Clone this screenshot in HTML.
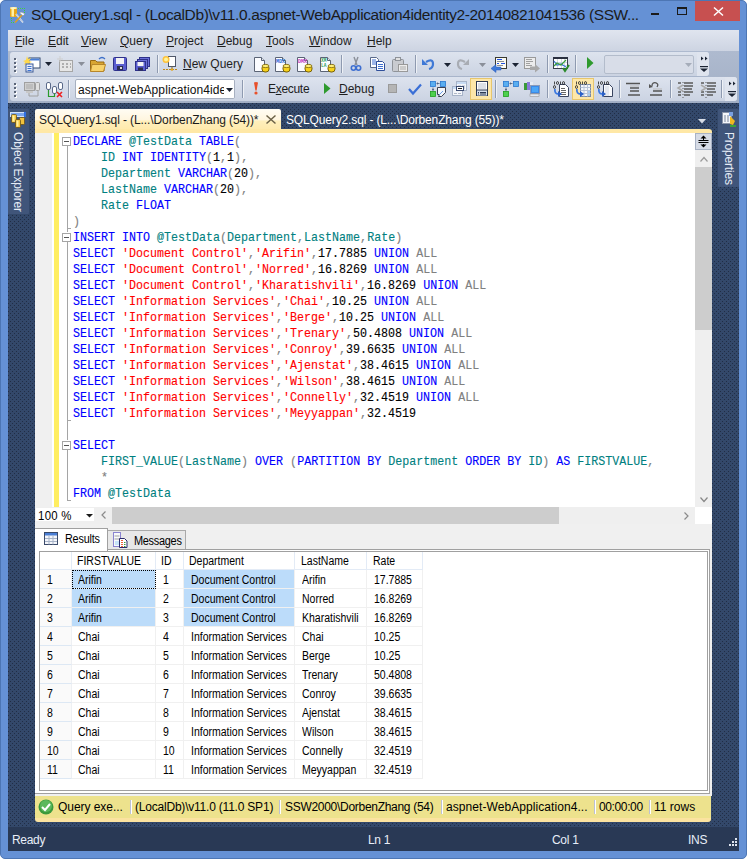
<!DOCTYPE html>
<html><head><meta charset="utf-8">
<style>
*{margin:0;padding:0;box-sizing:border-box}
html,body{width:747px;height:859px;overflow:hidden}
body{position:relative;background:#fff;font-family:"Liberation Sans",sans-serif;font-size:12px;color:#000}
.a{position:absolute}
svg.a{overflow:visible}
.nv{background-color:#33486a;background-image:conic-gradient(from 90deg at 1px 1px,transparent 0 50%,#202d45 50% 75%,transparent 75%),conic-gradient(from 90deg at 1px 1px,transparent 0 50%,#202d45 50% 75%,transparent 75%);background-size:4px 4px,4px 4px;background-position:0 0,2px 2px}
#frame{left:0;top:0;width:747px;height:859px;background:#6591d5;border:1px solid #4d76b4;border-radius:5px}
#title{left:31px;top:6px;font-size:15.5px;color:#1b1b1b;white-space:pre;letter-spacing:-0.38px}
#menubar{left:8px;top:30px;width:731px;height:21px;background:linear-gradient(#e0e5ef,#cdd4e2)}
.mi{position:absolute;top:4px;font-size:12px;color:#1e1e1e;white-space:pre}
u,.ul{text-decoration:underline;text-underline-offset:1px}
.tb{border-radius:3px;background:linear-gradient(#dde3ee,#cbd3e2)}
.code{font-family:"Liberation Mono",monospace;font-size:13px;line-height:16px;white-space:pre;transform-origin:0 0;transform:scaleX(0.89744);-webkit-text-stroke:0.12px}
.gt{font-size:12px;color:#000;white-space:pre;transform-origin:0 0;transform:scaleX(0.875)}
.st{font-size:12px;color:#000;white-space:pre;letter-spacing:-0.35px}
.sb{font-size:12px;color:#e8eef8;white-space:pre;letter-spacing:-0.3px}
.k{color:#0000ff}.i{color:#008080}.s{color:#ff0000}.g{color:#808080}.f{color:#ff00ff}
</style></head><body>
<div id="frame" class="a"></div>
<svg class="a" style="left:10px;top:7px" width="16" height="17" viewBox="0 0 16 17"><g fill="#3fcf3f"><rect x="8" y="1" width="1" height="1"/><rect x="10" y="1" width="1" height="1"/><rect x="12" y="1" width="1" height="1"/><rect x="14" y="1" width="1" height="1"/><rect x="14" y="3" width="1" height="1"/><rect x="14" y="5" width="1" height="1"/><rect x="1" y="11" width="1" height="1"/><rect x="1" y="13" width="1" height="1"/><rect x="1" y="15" width="1" height="1"/><rect x="3" y="15" width="1" height="1"/></g><rect x="0" y="0.5" width="7" height="9.5" rx="1" fill="#e8a81c"/><rect x="1.5" y="1" width="2.5" height="8.5" fill="#fff1a8"/><ellipse cx="3.5" cy="1" rx="3.5" ry="1" fill="#fff6c0"/><path d="M6 7L13 15.5" stroke="#e8eef8" stroke-width="1.6"/><path d="M6 7L13 15.5" stroke="#8a99b0" stroke-width="0.5"/><path d="M12 8L5 15.5" stroke="#e0a020" stroke-width="1.6"/><path d="M9 5.5Q12 4 15 7L13 9Z" fill="#f4f6fa" stroke="#7a8598" stroke-width="0.6"/></svg>
<div id="title" class="a">SQLQuery1.sql - (LocalDb)\v11.0.aspnet-WebApplication4identity2-20140821041536 (SSW...</div>
<div class="a" style="left:695px;top:1px;width:45px;height:20px;background:#c75050"></div>
<svg class="a" style="left:713px;top:7px" width="11" height="9"><path d="M1 0.5L10 8.5M10 0.5L1 8.5" stroke="#fff" stroke-width="1.5"/></svg>
<div class="a" style="left:677px;top:7px;width:10px;height:8px;border:1px solid #1b1b1b;border-top-width:2px"></div>
<div class="a" style="left:651px;top:13px;width:8px;height:2px;background:#1b1b1b"></div>
<div id="menubar" class="a">
<span class="mi" style="left:7px"><u>F</u>ile</span>
<span class="mi" style="left:40px"><u>E</u>dit</span>
<span class="mi" style="left:73px"><u>V</u>iew</span>
<span class="mi" style="left:112px"><u>Q</u>uery</span>
<span class="mi" style="left:158px"><u>P</u>roject</span>
<span class="mi" style="left:209px"><u>D</u>ebug</span>
<span class="mi" style="left:258px"><u>T</u>ools</span>
<span class="mi" style="left:301px"><u>W</u>indow</span>
<span class="mi" style="left:359px"><u>H</u>elp</span>
</div>
<div class="a" style="left:8px;top:51px;width:731px;height:52px;background:linear-gradient(#aebacf,#a2afc5)"></div>
<div class="a tb" style="left:10px;top:52px;width:699px;height:24px"></div>
<div class="a" style="left:697px;top:52px;width:12px;height:24px;background:#dfe4ee;border-radius:0 3px 3px 0"></div>
<div class="a tb" style="left:10px;top:77px;width:727px;height:24px"></div>
<div class="a" style="left:725px;top:77px;width:12px;height:24px;background:#dfe4ee;border-radius:0 3px 3px 0"></div>
<div class="a" style="left:14px;top:58px;width:2px;height:2px;background:#5b6578;box-shadow:1px 1px 0 #fff"></div><div class="a" style="left:14px;top:62px;width:2px;height:2px;background:#5b6578;box-shadow:1px 1px 0 #fff"></div><div class="a" style="left:14px;top:66px;width:2px;height:2px;background:#5b6578;box-shadow:1px 1px 0 #fff"></div><div class="a" style="left:14px;top:70px;width:2px;height:2px;background:#5b6578;box-shadow:1px 1px 0 #fff"></div>
<div class="a" style="left:14px;top:83px;width:2px;height:2px;background:#5b6578;box-shadow:1px 1px 0 #fff"></div><div class="a" style="left:14px;top:87px;width:2px;height:2px;background:#5b6578;box-shadow:1px 1px 0 #fff"></div><div class="a" style="left:14px;top:91px;width:2px;height:2px;background:#5b6578;box-shadow:1px 1px 0 #fff"></div><div class="a" style="left:14px;top:95px;width:2px;height:2px;background:#5b6578;box-shadow:1px 1px 0 #fff"></div>
<svg class="a" style="left:700px;top:56px" width="8" height="17" viewBox="0 0 8 17"><path d="M1 0.5L3.5 2.5L1 4.5Z M5 0.5L7.5 2.5L5 4.5Z" fill="#1b2333"/><rect x="0" y="10" width="8" height="1.2" fill="#1b2333"/><path d="M0 12.5H8L4 16Z" fill="#1b2333"/></svg>
<svg class="a" style="left:728px;top:81px" width="8" height="17" viewBox="0 0 8 17"><path d="M1 0.5L3.5 2.5L1 4.5Z M5 0.5L7.5 2.5L5 4.5Z" fill="#1b2333"/><rect x="0" y="10" width="8" height="1.2" fill="#1b2333"/><path d="M0 12.5H8L4 16Z" fill="#1b2333"/></svg>
<svg class="a" style="left:24px;top:56px" width="16" height="16" viewBox="0 0 16 16"><rect x="5" y="2" width="11" height="10" fill="#fff" stroke="#31466b"/><rect x="5.5" y="2.5" width="10" height="2" fill="#4a7fd6"/><path d="M3 0L4 3L7 2L5 5L8 6L5 7L6 9L3 7L0 9L1 6L-1 5L2 4Z" fill="#ffd84a"/><rect x="2" y="8" width="7" height="8" fill="#e8eefa" stroke="#3c5a95"/><path d="M3.5 10.5h4M3.5 12.5h4M3.5 14.5h4" stroke="#3e73d1"/></svg>
<svg class="a" style="left:45px;top:62px" width="7" height="4" viewBox="0 0 7 4"><path d="M0 0H7L3.5 4Z" fill="#1b2333"/></svg>
<svg class="a" style="left:57px;top:56px" width="16" height="16" viewBox="0 0 16 16"><rect x="2.5" y="4.5" width="13" height="11" fill="#e6e6e6" stroke="#a6a6a6"/><path d="M5 8h2M9 8h2M5 11h2M9 11h2M13 8h1M13 11h1" stroke="#9c9c9c" stroke-width="1.5"/><path d="M3 0v6M0 3h6" stroke="#cfcfcf"/></svg>
<svg class="a" style="left:78px;top:62px" width="7" height="4" viewBox="0 0 7 4"><path d="M0 0H7L3.5 4Z" fill="#8a8f99"/></svg>
<svg class="a" style="left:90px;top:56px" width="16" height="16" viewBox="0 0 16 16"><path d="M0.5 4.5h5l1.5 1.5h7v9h-13.5z" fill="#d9a632" stroke="#9a6b12"/><path d="M2 8.5h13.5l-2 7h-13z" fill="#f8d26b" stroke="#b7862a"/><path d="M9 3 Q12 0 15 3" stroke="#3d6fc8" fill="none" stroke-width="1.2"/></svg>
<svg class="a" style="left:113px;top:57px" width="14" height="14" viewBox="0 0 14 14"><rect x="0.5" y="0.5" width="13" height="13" rx="1" fill="#5a5ed0" stroke="#2e318a"/><rect x="3" y="1" width="8" height="6" fill="#f2f2f5"/><rect x="4" y="9" width="6" height="4" fill="#2a2d4f"/><rect x="7" y="10" width="2" height="2" fill="#ddd"/></svg>
<svg class="a" style="left:135px;top:57px" width="15" height="14" viewBox="0 0 15 14"><rect x="4.5" y="0.5" width="10" height="9" fill="#6a6ed8" stroke="#2e318a"/><rect x="2.5" y="2.5" width="10" height="9" fill="#6a6ed8" stroke="#2e318a"/><rect x="0.5" y="4.5" width="10" height="9" fill="#5a5ed0" stroke="#2e318a"/><rect x="2.5" y="5" width="6" height="4" fill="#f2f2f5"/><rect x="3" y="10.5" width="5" height="3" fill="#2a2d4f"/></svg>
<div class="a" style="left:157px;top:55px;width:1px;height:18px;background:#8e9ab0;box-shadow:1px 0 0 #eef1f6"></div>
<svg class="a" style="left:162px;top:56px" width="17" height="16" viewBox="0 0 17 16"><rect x="6.5" y="0.5" width="7" height="10" fill="#fff" stroke="#50586a"/><circle cx="4" cy="3.5" r="3.5" fill="#ffc23a"/><circle cx="4" cy="3.5" r="2" fill="#fff39a"/><path d="M1 13.5h15" stroke="#c08a1a" stroke-width="1.2" stroke-dasharray="2 1"/><path d="M10 10.5v3" stroke="#7d6a3a"/><circle cx="10" cy="13.5" r="1.3" fill="#e2a521"/></svg>
<div class="a" style="left:183px;top:57px"><span style="font-size:12px;color:#1e1e1e;white-space:pre"><u class="ul">N</u>ew Query</span></div>
<svg class="a" style="left:254px;top:57px" width="16" height="16" viewBox="0 0 16 16"><path d="M0.5 0.5h7l3 3v11h-10z" fill="#fbfcff" stroke="#5b6475"/><path d="M7.5 0.5v3h3" fill="#e2e7ef" stroke="#5b6475"/><rect x="8" y="8" width="7" height="7" rx="3" fill="#f7d21c" stroke="#7a6206"/><ellipse cx="11.5" cy="9" rx="3.5" ry="1.6" fill="#fff07a" stroke="#7a6206" stroke-width="0.8"/></svg>
<svg class="a" style="left:275px;top:57px" width="16" height="16" viewBox="0 0 16 16"><path d="M0.5 0.5h7l3 3v11h-10z" fill="#fbfcff" stroke="#5b6475"/><path d="M7.5 0.5v3h3" fill="#e2e7ef" stroke="#5b6475"/><text x="1" y="6" font-size="5" font-family="Liberation Mono" font-weight="bold" fill="#2a6ad6">MDX</text><rect x="8" y="8" width="7" height="7" rx="3" fill="#f7d21c" stroke="#7a6206"/><ellipse cx="11.5" cy="9" rx="3.5" ry="1.6" fill="#fff07a" stroke="#7a6206" stroke-width="0.8"/></svg>
<svg class="a" style="left:297px;top:57px" width="16" height="16" viewBox="0 0 16 16"><path d="M0.5 0.5h7l3 3v11h-10z" fill="#fbfcff" stroke="#5b6475"/><path d="M7.5 0.5v3h3" fill="#e2e7ef" stroke="#5b6475"/><text x="1" y="6" font-size="5" font-family="Liberation Mono" font-weight="bold" fill="#c03ac0">DMX</text><rect x="8" y="8" width="7" height="7" rx="3" fill="#f7d21c" stroke="#7a6206"/><ellipse cx="11.5" cy="9" rx="3.5" ry="1.6" fill="#fff07a" stroke="#7a6206" stroke-width="0.8"/></svg>
<svg class="a" style="left:320px;top:57px" width="16" height="16" viewBox="0 0 16 16"><path d="M0.5 0.5h7l3 3v11h-10z" fill="#fbfcff" stroke="#5b6475"/><path d="M7.5 0.5v3h3" fill="#e2e7ef" stroke="#5b6475"/><text x="1" y="5" font-size="4.5" font-family="Liberation Mono" font-weight="bold" fill="#2aa060">XM</text><text x="1" y="10" font-size="4.5" font-family="Liberation Mono" font-weight="bold" fill="#2aa060">LA</text><rect x="8" y="8" width="7" height="7" rx="3" fill="#f7d21c" stroke="#7a6206"/><ellipse cx="11.5" cy="9" rx="3.5" ry="1.6" fill="#fff07a" stroke="#7a6206" stroke-width="0.8"/></svg>
<div class="a" style="left:341px;top:55px;width:1px;height:18px;background:#8e9ab0;box-shadow:1px 0 0 #eef1f6"></div>
<svg class="a" style="left:351px;top:57px" width="10" height="14" viewBox="0 0 10 14"><path d="M3 0L6 8M7 0L4 8" stroke="#8a8f98" stroke-width="1.4"/><circle cx="2.5" cy="11" r="2.2" fill="none" stroke="#3e6fd1" stroke-width="1.6"/><circle cx="7.5" cy="11" r="2.2" fill="none" stroke="#3e6fd1" stroke-width="1.6"/></svg>
<svg class="a" style="left:370px;top:57px" width="15" height="14" viewBox="0 0 15 14"><path d="M0.5 0.5h6l2 2v8h-8z" fill="#fff" stroke="#5a6a8a"/><path d="M2 3h4M2 5h5M2 7h5" stroke="#3e6fd1"/><path d="M6.5 4.5h6l2 2v7h-8z" fill="#fff" stroke="#2f4f9a"/><path d="M8 7.5h5M8 9.5h5M8 11.5h5" stroke="#3e6fd1"/></svg>
<svg class="a" style="left:392px;top:57px" width="16" height="15" viewBox="0 0 16 15"><rect x="0.5" y="2.5" width="11" height="12" rx="1" fill="#c9cbd0" stroke="#8f9399"/><rect x="3.5" y="0.5" width="5" height="3" fill="#e0e0e0" stroke="#8f9399"/><rect x="6.5" y="7.5" width="9" height="7" fill="#ececec" stroke="#999"/><path d="M8 10h6M8 12h6" stroke="#aaa"/></svg>
<div class="a" style="left:415px;top:55px;width:1px;height:18px;background:#8e9ab0;box-shadow:1px 0 0 #eef1f6"></div>
<svg class="a" style="left:422px;top:58px" width="13" height="12" viewBox="0 0 13 12"><path d="M4 4 Q11 0 11 6 Q11 10 7 11" fill="none" stroke="#3f79d6" stroke-width="2.2"/><path d="M0 1L6 7L0 7Z" fill="#3f79d6"/></svg>
<svg class="a" style="left:444px;top:63px" width="7" height="4" viewBox="0 0 7 4"><path d="M0 0H7L3.5 4Z" fill="#1b2333"/></svg>
<svg class="a" style="left:457px;top:58px" width="12" height="12" viewBox="0 0 12 12"><path d="M8 4 Q1 0 1 6 Q1 10 5 11" fill="none" stroke="#a8acb3" stroke-width="2.2"/><path d="M12 1L6 7L12 7Z" fill="#a8acb3"/></svg>
<svg class="a" style="left:479px;top:63px" width="7" height="4" viewBox="0 0 7 4"><path d="M0 0H7L3.5 4Z" fill="#8a8f99"/></svg>
<svg class="a" style="left:491px;top:57px" width="16" height="15" viewBox="0 0 16 15"><rect x="4.5" y="0.5" width="11" height="11" fill="#fbfbf4" stroke="#3a3a30"/><path d="M6 2.5h5M6 6.5h2M10 6.5h4" stroke="#2050e0" stroke-width="1"/><path d="M6 4.5h7M6 8.5h6" stroke="#909090" stroke-width="1"/><path d="M0 11.5L5 7.5V10H10V13H5V15.5Z" fill="#3f7ad8" stroke="#2a5ab8" stroke-width="0.5"/></svg>
<svg class="a" style="left:512px;top:63px" width="7" height="4" viewBox="0 0 7 4"><path d="M0 0H7L3.5 4Z" fill="#1b2333"/></svg>
<svg class="a" style="left:524px;top:57px" width="16" height="15" viewBox="0 0 16 15"><rect x="0.5" y="0.5" width="11" height="11" fill="#ececec" stroke="#9a9a9a"/><path d="M2 2.5h6M2 4.5h7M2 6.5h4M2 8.5h6" stroke="#a0a0a0" stroke-width="1"/><path d="M6 9.5H11V7L16 11.5L11 15.5V13H6Z" fill="#a8a8a8"/></svg>
<div class="a" style="left:547px;top:55px;width:1px;height:18px;background:#8e9ab0;box-shadow:1px 0 0 #eef1f6"></div>
<svg class="a" style="left:553px;top:57px" width="17" height="15" viewBox="0 0 17 15"><rect x="0.5" y="0.5" width="14" height="11" fill="#fff" stroke="#3a4050"/><rect x="0" y="0" width="15" height="2" fill="#2a3040"/><path d="M1 5.5h13M1 8.5h13M4.5 2v9M8.5 2v9M11.5 2v9" stroke="#c8d0e0" stroke-width="0.8"/><path d="M1 4L4 8L8 7L13 10" stroke="#3e7ad8" fill="none" stroke-width="1.2"/><path d="M1 9L4 6L8 8L13 3" stroke="#3aa03a" fill="none" stroke-width="1.2"/><path d="M10 11L12 14L16 8" stroke="#2a8a2a" fill="none" stroke-width="2"/></svg>
<div class="a" style="left:575px;top:55px;width:1px;height:18px;background:#8e9ab0;box-shadow:1px 0 0 #eef1f6"></div>
<svg class="a" style="left:587px;top:57px" width="7" height="12" viewBox="0 0 7 12"><path d="M0 0L6.5 6L0 12Z" fill="#2e9a2e"/></svg>
<div class="a" style="left:604px;top:55px;width:90px;height:19px;background:#d8dde8;border:1px solid #b3bccb;border-radius:2px"></div>
<svg class="a" style="left:685px;top:63px" width="7" height="4" viewBox="0 0 7 4"><path d="M0 0H7L3.5 4Z" fill="#a6adba"/></svg>
<svg class="a" style="left:24px;top:82px" width="16" height="15" viewBox="0 0 16 15"><rect x="0.5" y="0.5" width="10" height="8" fill="#d0d0d0" stroke="#a0a0a0"/><rect x="2" y="2" width="7" height="5" fill="#bdbdbd"/><rect x="2" y="9" width="7" height="2" fill="#c8c8c8"/><rect x="11.5" y="0.5" width="4" height="8" rx="1" fill="#e0e0e0" stroke="#a0a0a0"/><path d="M5 11v3h9v-5" stroke="#a0a0a0" fill="none"/></svg>
<svg class="a" style="left:46px;top:82px" width="17" height="16" viewBox="0 0 17 16"><rect x="0.5" y="0.5" width="4" height="7" rx="1.5" fill="#fff" stroke="#5a6a8a"/><rect x="6.5" y="4.5" width="4" height="7" rx="1.5" fill="#fff" stroke="#5a6a8a"/><rect x="12.5" y="0.5" width="4" height="7" rx="1.5" fill="#fff" stroke="#5a6a8a"/><path d="M2.5 8v6.5h6v-3" stroke="#2a9a2a" fill="none" stroke-width="1.2"/><path d="M11 10L16 15M16 10L11 15" stroke="#ee2020" stroke-width="1.6"/></svg>
<div class="a" style="left:68px;top:80px;width:1px;height:18px;background:#8e9ab0;box-shadow:1px 0 0 #eef1f6"></div>
<div class="a" style="left:75px;top:79px;width:160px;height:20px;background:#fff;border:1px solid #a7b0c0;border-radius:2px;overflow:hidden"><span class="a" style="left:2px;top:3px;font-size:12px;color:#101010;white-space:pre;letter-spacing:0.1px">aspnet-WebApplication4identity2</span><div class="a" style="left:148px;top:0;width:11px;height:18px;background:#fff"></div></div>
<svg class="a" style="left:226px;top:88px" width="7" height="4" viewBox="0 0 7 4"><path d="M0 0H7L3.5 4Z" fill="#1b2333"/></svg>
<div class="a" style="left:242px;top:80px;width:1px;height:18px;background:#8e9ab0;box-shadow:1px 0 0 #eef1f6"></div>
<svg class="a" style="left:253px;top:82px" width="6" height="13" viewBox="0 0 6 13"><path d="M1 0.5Q3 -0.5 5 0.5L3.6 8.5H2.4Z" fill="#e8502a"/><circle cx="3" cy="11" r="1.6" fill="#e8502a"/></svg>
<div class="a" style="left:268px;top:82px"><span style="font-size:12px;color:#1e1e1e;white-space:pre;letter-spacing:-0.3px">E<u class="ul">x</u>ecute</span></div>
<svg class="a" style="left:324px;top:83px" width="7" height="11" viewBox="0 0 7 11"><path d="M0 0L6.5 5.5L0 11Z" fill="#2e9a2e"/></svg>
<div class="a" style="left:339px;top:82px"><span style="font-size:12px;color:#1e1e1e;white-space:pre"><u class="ul">D</u>ebug</span></div>
<svg class="a" style="left:388px;top:84px" width="9" height="9" viewBox="0 0 9 9"><rect x="0" y="0" width="9" height="9" fill="#9a9a9a"/><rect x="1" y="1" width="7" height="7" fill="#b5b5b5"/></svg>
<svg class="a" style="left:408px;top:84px" width="14" height="11" viewBox="0 0 14 11"><path d="M1 5L5 9.5L13 0.5" stroke="#3a6fd6" stroke-width="2.2" fill="none"/></svg>
<svg class="a" style="left:430px;top:81px" width="16" height="16" viewBox="0 0 16 16"><rect x="0.5" y="0.5" width="5" height="5" fill="#5aaef0" stroke="#2a78d0" stroke-width="0.8"/><rect x="10.5" y="0.5" width="5" height="5" fill="#5aaef0" stroke="#2a78d0" stroke-width="0.8"/><path d="M6.5 2.5h3M7.5 1.5v2" stroke="#4a5a78" stroke-width="0.8"/><path d="M3 6.5v4M2 8.5h2" stroke="#4a5a78" stroke-width="0.8"/><rect x="0.5" y="10.5" width="5" height="5" fill="#4ed04e" stroke="#1f9f1f" stroke-width="0.8"/><path d="M7.5 6.5h8v5l-4 4h-3l1-2h-2z" fill="#f4f6fa" stroke="#2a3040" stroke-width="0.9"/><path d="M9 14L13 10" stroke="#6aa0e8" stroke-width="1"/></svg>
<svg class="a" style="left:452px;top:81px" width="15" height="15" viewBox="0 0 15 15"><rect x="4.5" y="0.5" width="10" height="9" fill="#f4f6fa" stroke="#a8b4c8"/><rect x="5" y="1" width="9" height="2" fill="#c8dcf4"/><path d="M6 5h3M10 5h3M6 7h3M10 7h3" stroke="#b0b8c8"/><rect x="0.5" y="5.5" width="10" height="9" fill="#f4f6fa" stroke="#a8b4c8"/><rect x="1" y="6" width="9" height="2" fill="#c8dcf4"/><path d="M2 12.5h3M6 12.5h3" stroke="#b0b8c8"/><rect x="4.5" y="5.5" width="7" height="4" fill="#fff" stroke="#3a4a70" stroke-width="1"/><path d="M6 7.5h4" stroke="#222"/></svg>
<div class="a" style="left:470px;top:78px;width:22px;height:22px;background:#fde7a9;border:1px solid #e7c66d"></div>
<svg class="a" style="left:476px;top:81px" width="12" height="16" viewBox="0 0 12 16"><rect x="0.5" y="0.5" width="11" height="14" fill="#fff" stroke="#2e3a52"/><path d="M2 3h8M2 5h8M2 7h8" stroke="#b8c0cc"/><rect x="1" y="9" width="10" height="5.5" fill="#d4deec"/><path d="M1 9h10" stroke="#2e3a52"/><path d="M2 11.5h1M4 11.5h6M2 13h1M4 13h6" stroke="#2e3a52" stroke-width="1"/></svg>
<div class="a" style="left:495px;top:80px;width:1px;height:18px;background:#8e9ab0;box-shadow:1px 0 0 #eef1f6"></div>
<svg class="a" style="left:503px;top:81px" width="16" height="16" viewBox="0 0 16 16"><rect x="0.5" y="0.5" width="5" height="5" fill="#5aaef0" stroke="#2a78d0" stroke-width="0.8"/><rect x="10.5" y="0.5" width="5" height="5" fill="#5aaef0" stroke="#2a78d0" stroke-width="0.8"/><path d="M6.5 2.5h3M7.5 1.5v2" stroke="#4a5a78" stroke-width="0.8"/><path d="M3 6.5v4M2 8.5h2" stroke="#4a5a78" stroke-width="0.8"/><rect x="0.5" y="10.5" width="5" height="5" fill="#4ed04e" stroke="#1f9f1f" stroke-width="0.8"/></svg>
<svg class="a" style="left:524px;top:81px" width="16" height="16" viewBox="0 0 16 16"><rect x="0" y="2" width="3" height="7" fill="#3a9a3a"/><rect x="3" y="1" width="3" height="8" fill="#8a7ad8"/><rect x="6" y="1" width="3" height="6" fill="#e8ecf4"/><rect x="6.5" y="4.5" width="9" height="8" fill="#3a8ae8" stroke="#8a9ab8"/><rect x="8" y="6" width="6" height="5" fill="#4aa6f8"/><rect x="6" y="13" width="9" height="2.5" fill="#e4e8f0" stroke="#888" stroke-width="0.5"/></svg>
<div class="a" style="left:547px;top:80px;width:1px;height:18px;background:#8e9ab0;box-shadow:1px 0 0 #eef1f6"></div>
<svg class="a" style="left:553px;top:81px" width="16" height="16" viewBox="0 0 16 16"><path d="M6.5 3.5h6l3 3v9h-9z" fill="#fff" stroke="#3a4560"/><path d="M8 7.5h4M8 9.5h5M8 11.5h5M8 13.5h5" stroke="#666" stroke-width="1"/><g stroke="#222" stroke-width="0.8" fill="none"><path d="M1.5 0.5v3"/><ellipse cx="4.5" cy="2" rx="1" ry="1.5"/><path d="M7.5 0.5v3"/><ellipse cx="10.5" cy="2" rx="1" ry="1.5"/><ellipse cx="1.5" cy="6" rx="1" ry="1.5"/></g><path d="M2 8Q1 13 6 13" stroke="#3a78e0" stroke-width="1.8" fill="none"/><path d="M5 10L9 13L5 16Z" fill="#2a60c8"/></svg>
<div class="a" style="left:572px;top:78px;width:22px;height:22px;background:#fde7a9;border:1px solid #e7c66d"></div>
<svg class="a" style="left:575px;top:81px" width="16" height="16" viewBox="0 0 16 16"><rect x="5.5" y="3.5" width="10" height="12" fill="#f4f6fa" stroke="#7a8aa6"/><path d="M5.5 6.5h10M5.5 9.5h10M5.5 12.5h10M9 3.5v12M12.5 3.5v12" stroke="#b8c4d8"/><rect x="13" y="10" width="2" height="2" fill="#a8ccf0"/><rect x="13" y="13" width="2" height="2" fill="#a8ccf0"/><g stroke="#222" stroke-width="0.8" fill="none"><path d="M1.5 0.5v3"/><ellipse cx="4.5" cy="2" rx="1" ry="1.5"/><path d="M7.5 0.5v3"/><ellipse cx="10.5" cy="2" rx="1" ry="1.5"/><ellipse cx="1.5" cy="6" rx="1" ry="1.5"/></g><path d="M2 8Q1 13 6 13" stroke="#3a78e0" stroke-width="1.8" fill="none"/><path d="M5 10L9 13L5 16Z" fill="#2a60c8"/></svg>
<svg class="a" style="left:597px;top:81px" width="16" height="16" viewBox="0 0 16 16"><path d="M6.5 3.5h6l3 3v9h-9z" fill="#f8f9fc" stroke="#3a4560"/><path d="M8 5h4v10h-4z" fill="#e4e8f0"/><g stroke="#222" stroke-width="0.8" fill="none"><path d="M1.5 0.5v3"/><ellipse cx="4.5" cy="2" rx="1" ry="1.5"/><path d="M7.5 0.5v3"/><ellipse cx="10.5" cy="2" rx="1" ry="1.5"/><ellipse cx="1.5" cy="6" rx="1" ry="1.5"/></g><path d="M2 8Q1 13 6 13" stroke="#3a78e0" stroke-width="1.8" fill="none"/><path d="M5 10L9 13L5 16Z" fill="#2a60c8"/></svg>
<div class="a" style="left:619px;top:80px;width:1px;height:18px;background:#8e9ab0;box-shadow:1px 0 0 #eef1f6"></div>
<svg class="a" style="left:626px;top:82px" width="15" height="15" viewBox="0 0 15 15"><path d="M0 1.5h14M4 6h9M4 9h9M2 13h12" stroke="#555" stroke-width="1.4"/><path d="M4 4h9" stroke="#bbb"/></svg>
<svg class="a" style="left:649px;top:82px" width="14" height="15" viewBox="0 0 14 15"><path d="M3 4Q3 0 7 0.8Q10 2 8 5" stroke="#555" fill="none" stroke-width="1.3"/><path d="M0 2L4 5L0 6Z" fill="#555"/><path d="M4 9h9M1 13h12" stroke="#555" stroke-width="1.4"/><path d="M4 7h9" stroke="#bbb"/></svg>
<div class="a" style="left:670px;top:80px;width:1px;height:18px;background:#8e9ab0;box-shadow:1px 0 0 #eef1f6"></div>
<svg class="a" style="left:677px;top:82px" width="16" height="16" viewBox="0 0 16 16"><path d="M1 1h3M7 1h9M7 4h9M7 7h8M1 10h3M7 10h9M1 13h3M7 13h6" stroke="#5a5a5a" stroke-width="1.3"/><path d="M6 0v16" stroke="#5a5a5a" stroke-dasharray="1 2"/><path d="M6 3L1 6L6 9" stroke="#aaa" fill="none" stroke-width="1.5"/></svg>
<svg class="a" style="left:700px;top:82px" width="16" height="16" viewBox="0 0 16 16"><path d="M1 1h3M7 1h9M7 4h9M7 7h8M1 10h3M7 10h9M1 13h3M7 13h6" stroke="#5a5a5a" stroke-width="1.3"/><path d="M6 0v16" stroke="#5a5a5a" stroke-dasharray="1 2"/><path d="M1 3L6 6L1 9" stroke="#aaa" fill="none" stroke-width="1.5"/></svg>
<div class="a" style="left:721px;top:80px;width:1px;height:18px;background:#8e9ab0;box-shadow:1px 0 0 #eef1f6"></div>

<div class="a nv" style="left:8px;top:103px;width:731px;height:724px"></div>
<div class="a" style="left:8px;top:109px;width:21px;height:105px;background:#40557a;border-radius:1px"></div>
<svg class="a" style="left:10px;top:112px" width="16" height="16" viewBox="0 0 16 16"><rect x="0" y="0" width="16" height="5" fill="#cfe0fa"/><rect x="1" y="1" width="13" height="3" fill="#7aa6ee"/><rect x="14" y="0" width="2" height="5" fill="#2f6ee0"/><rect x="1.5" y="2.5" width="5" height="8" rx="1" fill="#f2c23c" stroke="#6a5218" stroke-width="0.8"/><rect x="2.5" y="3.5" width="2" height="6" fill="#fff0a0"/><rect x="9.5" y="5.5" width="5" height="7" rx="1" fill="#f2c23c" stroke="#6a5218" stroke-width="0.8"/><rect x="5.5" y="7.5" width="5" height="8" rx="1" fill="#f2c23c" stroke="#6a5218" stroke-width="0.8"/><rect x="6.5" y="8.5" width="2" height="6" fill="#fff0a0"/></svg>
<div class="a" style="left:9px;top:132px;width:82px;height:16px;transform-origin:0 0;transform:translate(16px,0) rotate(90deg);color:#e6ecf6;font-size:12px;white-space:pre;letter-spacing:-0.2px">Object Explorer</div>
<div class="a" style="left:718px;top:109px;width:21px;height:78px;background:#40557a;border-radius:1px"></div>
<svg class="a" style="left:722px;top:112px" width="14" height="15" viewBox="0 0 14 15"><rect x="0.5" y="0.5" width="9" height="11" fill="#f4f6fa" stroke="#8a94a8"/><path d="M3 3v7M6 3v7" stroke="#7b869c"/><rect x="7" y="0" width="4" height="4" fill="#7aa0e0"/><path d="M8 4L13 9L11 13L8 12Z" fill="#f0b820"/><rect x="8" y="13" width="6" height="2" fill="#3aa03a"/></svg>
<div class="a" style="left:720px;top:132px;width:56px;height:16px;transform-origin:0 0;transform:translate(16px,0) rotate(90deg);color:#e6ecf6;font-size:12px;white-space:pre;letter-spacing:-0.2px">Properties</div>
<svg class="a" style="left:698px;top:119px" width="8" height="5" viewBox="0 0 8 5"><path d="M0 0H8L4 4.5Z" fill="#d8dde6"/></svg>
<div class="a" style="left:286px;top:113px;color:#fff;font-size:12px;white-space:pre;letter-spacing:-0.14px">SQLQuery2.sql - (L...\DorbenZhang (55))*</div>
<div class="a" style="left:35px;top:109px;width:246px;height:24px;border-radius:2px 2px 0 0;background:linear-gradient(#fffcf4 0,#fff6df 45%,#ffefbc 50%,#ffe8a6 100%)"></div>
<div class="a" style="left:39px;top:113px;color:#1b1b1b;font-size:12px;white-space:pre;letter-spacing:-0.1px">SQLQuery1.sql - (L...\DorbenZhang (54))*</div>
<svg class="a" style="left:266px;top:115px" width="10" height="9" viewBox="0 0 10 9"><path d="M0.5 0.5L9.5 8.5M9.5 0.5L0.5 8.5" stroke="#6b6147" stroke-width="1.5"/></svg>
<div class="a" style="left:35px;top:129px;width:677px;height:4px;background:#ffe8a6;border-radius:0 3px 0 0"></div>
<div class="a" style="left:35px;top:133px;width:660px;height:374px;background:#fff"></div>
<div class="a" style="left:35px;top:133px;width:17px;height:374px;background:#f0f0f0"></div>
<div class="a" style="left:54px;top:133px;width:5px;height:374px;background:#ffee62"></div>
<div class="a" style="left:67px;top:146px;width:1px;height:86px;background:#a5a5a5"></div>
<div class="a" style="left:67px;top:228px;width:4px;height:1px;background:#a5a5a5"></div>
<div class="a" style="left:67px;top:242px;width:1px;height:198px;background:#a5a5a5"></div>
<div class="a" style="left:67px;top:420px;width:4px;height:1px;background:#a5a5a5"></div>
<div class="a" style="left:67px;top:450px;width:1px;height:51px;background:#a5a5a5"></div>
<div class="a" style="left:67px;top:500px;width:4px;height:1px;background:#a5a5a5"></div>
<svg class="a" style="left:62px;top:137px" width="9" height="9" viewBox="0 0 9 9"><rect x="0.5" y="0.5" width="8" height="8" fill="#fff" stroke="#a5a5a5"/><path d="M2 4.5h5" stroke="#555"/></svg>
<svg class="a" style="left:62px;top:233px" width="9" height="9" viewBox="0 0 9 9"><rect x="0.5" y="0.5" width="8" height="8" fill="#fff" stroke="#a5a5a5"/><path d="M2 4.5h5" stroke="#555"/></svg>
<svg class="a" style="left:62px;top:441px" width="9" height="9" viewBox="0 0 9 9"><rect x="0.5" y="0.5" width="8" height="8" fill="#fff" stroke="#a5a5a5"/><path d="M2 4.5h5" stroke="#555"/></svg>
<div class="a code" style="left:73px;top:134px"><span class="k">DECLARE</span> <span class="i">@TestData</span> <span class="k">TABLE</span><span class="g">(</span>
    <span class="i">ID</span> <span class="k">INT</span> <span class="k">IDENTITY</span><span class="g">(</span>1<span class="g">,</span>1<span class="g">)</span><span class="g">,</span>
    <span class="i">Department</span> <span class="k">VARCHAR</span><span class="g">(</span>20<span class="g">)</span><span class="g">,</span>
    <span class="i">LastName</span> <span class="k">VARCHAR</span><span class="g">(</span>20<span class="g">)</span><span class="g">,</span>
    <span class="i">Rate</span> <span class="k">FLOAT</span>
<span class="g">)</span>
<span class="k">INSERT</span> <span class="k">INTO</span> <span class="i">@TestData</span><span class="g">(</span><span class="i">Department</span><span class="g">,</span><span class="i">LastName</span><span class="g">,</span><span class="i">Rate</span><span class="g">)</span>
<span class="k">SELECT</span> <span class="s">'Document Control'</span><span class="g">,</span><span class="s">'Arifin'</span><span class="g">,</span>17.7885 <span class="k">UNION</span> <span class="g">ALL</span>
<span class="k">SELECT</span> <span class="s">'Document Control'</span><span class="g">,</span><span class="s">'Norred'</span><span class="g">,</span>16.8269 <span class="k">UNION</span> <span class="g">ALL</span>
<span class="k">SELECT</span> <span class="s">'Document Control'</span><span class="g">,</span><span class="s">'Kharatishvili'</span><span class="g">,</span>16.8269 <span class="k">UNION</span> <span class="g">ALL</span>
<span class="k">SELECT</span> <span class="s">'Information Services'</span><span class="g">,</span><span class="s">'Chai'</span><span class="g">,</span>10.25 <span class="k">UNION</span> <span class="g">ALL</span>
<span class="k">SELECT</span> <span class="s">'Information Services'</span><span class="g">,</span><span class="s">'Berge'</span><span class="g">,</span>10.25 <span class="k">UNION</span> <span class="g">ALL</span>
<span class="k">SELECT</span> <span class="s">'Information Services'</span><span class="g">,</span><span class="s">'Trenary'</span><span class="g">,</span>50.4808 <span class="k">UNION</span> <span class="g">ALL</span>
<span class="k">SELECT</span> <span class="s">'Information Services'</span><span class="g">,</span><span class="s">'Conroy'</span><span class="g">,</span>39.6635 <span class="k">UNION</span> <span class="g">ALL</span>
<span class="k">SELECT</span> <span class="s">'Information Services'</span><span class="g">,</span><span class="s">'Ajenstat'</span><span class="g">,</span>38.4615 <span class="k">UNION</span> <span class="g">ALL</span>
<span class="k">SELECT</span> <span class="s">'Information Services'</span><span class="g">,</span><span class="s">'Wilson'</span><span class="g">,</span>38.4615 <span class="k">UNION</span> <span class="g">ALL</span>
<span class="k">SELECT</span> <span class="s">'Information Services'</span><span class="g">,</span><span class="s">'Connelly'</span><span class="g">,</span>32.4519 <span class="k">UNION</span> <span class="g">ALL</span>
<span class="k">SELECT</span> <span class="s">'Information Services'</span><span class="g">,</span><span class="s">'Meyyappan'</span><span class="g">,</span>32.4519

<span class="k">SELECT</span>
    <span class="i">FIRST_VALUE</span><span class="g">(</span><span class="i">LastName</span><span class="g">)</span> <span class="k">OVER</span> <span class="g">(</span><span class="k">PARTITION</span> <span class="k">BY</span> <span class="i">Department</span> <span class="k">ORDER</span> <span class="k">BY</span> <span class="i">ID</span><span class="g">)</span> <span class="k">AS</span> <span class="i">FIRSTVALUE</span><span class="g">,</span>
    <span class="g">*</span>
<span class="k">FROM</span> <span class="i">@TestData</span></div>
<div class="a" style="left:695px;top:133px;width:17px;height:374px;background:#efefef"></div>
<div class="a" style="left:695px;top:133px;width:17px;height:17px;background:#d6dbe5;border:1px solid #a9b3c5"></div>
<svg class="a" style="left:698px;top:135px" width="11" height="13" viewBox="0 0 11 13"><path d="M5.5 0.5L8.5 3.5H2.5Z" fill="#000"/><path d="M5.5 3v2M5.5 9v2" stroke="#000"/><path d="M0.5 5.5h10M0.5 7.5h10" stroke="#000"/><path d="M5.5 12.5L8.5 9.5H2.5Z" fill="#000"/></svg>
<svg class="a" style="left:700px;top:156px" width="8" height="6" viewBox="0 0 8 6"><path d="M0.5 5.5L4 1.5L7.5 5.5" stroke="#9a9a9a" fill="none" stroke-width="1.2"/></svg>
<div class="a" style="left:695px;top:167px;width:17px;height:163px;background:#cdcdcd"></div>
<svg class="a" style="left:700px;top:497px" width="8" height="6" viewBox="0 0 8 6"><path d="M0.5 0.5L4 4.5L7.5 0.5" stroke="#868686" fill="none" stroke-width="1.2"/></svg>
<div class="a" style="left:35px;top:507px;width:677px;height:17px;background:#efefef"></div>
<div class="a" style="left:36px;top:508px;width:58px;height:13px;background:#fff"></div>
<div class="a" style="left:38px;top:509px;font-size:12px;color:#000;white-space:pre;letter-spacing:0.3px;transform-origin:0 0;transform:scaleX(0.95)">100 %</div>
<svg class="a" style="left:86px;top:514px" width="7" height="4" viewBox="0 0 7 4"><path d="M0 0H7L3.5 3.5Z" fill="#1a1a1a"/></svg>
<svg class="a" style="left:101px;top:511px" width="5" height="8" viewBox="0 0 5 8"><path d="M4.5 0.5L1 4L4.5 7.5" stroke="#8a8a8a" fill="none" stroke-width="1.2"/></svg>
<div class="a" style="left:112px;top:507px;width:447px;height:17px;background:#cdcdcd"></div>
<svg class="a" style="left:684px;top:512px" width="5" height="8" viewBox="0 0 5 8"><path d="M0.5 0.5L4 4L0.5 7.5" stroke="#8a8a8a" fill="none" stroke-width="1.2"/></svg>
<div class="a" style="left:695px;top:507px;width:17px;height:17px;background:#fff"></div>
<div class="a" style="left:35px;top:524px;width:677px;height:272px;background:#f0f0f0"></div>
<div class="a" style="left:107px;top:530px;width:79px;height:20px;background:#e8e8e8;border:1px solid #a9a9a9;border-bottom:none"></div>
<svg class="a" style="left:113px;top:532px" width="15" height="16" viewBox="0 0 15 16"><rect x="0.5" y="0.5" width="7" height="14" fill="#f8fafc" stroke="#8a84d0"/><path d="M1.5 4h5M1.5 7h5" stroke="#a0a0a0"/><rect x="2" y="9" width="4" height="4" fill="#c8e4f8"/><path d="M6.5 6.5h5l2.5 2.5v6.5h-7.5z" fill="#fff" stroke="#2a2a6a"/><path d="M8 8.5h2M8 10.5h2M8 12.5h2M8 14.5h2" stroke="#f0603a" stroke-width="1.2"/><path d="M11 10.5h1.5M11 12.5h1.5M11 14.5h1.5" stroke="#3a9a3a" stroke-width="1.2"/></svg>
<div class="a" style="left:134px;top:534px;font-size:12px;white-space:pre;letter-spacing:-0.3px;transform-origin:0 0;transform:scaleX(0.91);color:#000">Messages</div>
<div class="a" style="left:35px;top:549px;width:675px;height:245px;background:#fff;border:1px solid #a0a0a0;border-left:none"></div>
<div class="a" style="left:39px;top:551px;width:669px;height:240px;background:#fff;border:1px solid #a0a0a0"></div>
<div class="a" style="left:35px;top:528px;width:73px;height:23px;background:#fff;border:1px solid #a0a0a0;border-left:none;border-bottom:none"></div>
<svg class="a" style="left:44px;top:532px" width="14" height="13" viewBox="0 0 14 13"><rect x="0.5" y="0.5" width="13" height="12" fill="#f4f6fb" stroke="#3a4a6a"/><rect x="1" y="1" width="12" height="2.5" fill="#4a7fd6"/><path d="M1 6.5h12M1 9.5h12M5 3.5v9M9 3.5v9" stroke="#a8b4c8"/></svg>
<div class="a" style="left:65px;top:532px;font-size:12px;white-space:pre;letter-spacing:-0.2px;transform-origin:0 0;transform:scaleX(0.9);color:#000">Results</div>
<div class="a" style="left:40px;top:552px;width:32px;height:18px;border-right:1px solid #e3ebf6;border-bottom:1px solid #e3ebf6"></div>
<div class="a" style="left:72px;top:552px;width:84px;height:18px;border-right:1px solid #e3ebf6;border-bottom:1px solid #e3ebf6"></div>
<div class="a gt" style="left:76.5px;top:554px">FIRSTVALUE</div>
<div class="a" style="left:156px;top:552px;width:28px;height:18px;border-right:1px solid #e3ebf6;border-bottom:1px solid #e3ebf6"></div>
<div class="a gt" style="left:160.5px;top:554px">ID</div>
<div class="a" style="left:184px;top:552px;width:111px;height:18px;border-right:1px solid #e3ebf6;border-bottom:1px solid #e3ebf6"></div>
<div class="a gt" style="left:188.5px;top:554px">Department</div>
<div class="a" style="left:295px;top:552px;width:72px;height:18px;border-right:1px solid #e3ebf6;border-bottom:1px solid #e3ebf6"></div>
<div class="a gt" style="left:301px;top:554px">LastName</div>
<div class="a" style="left:367px;top:552px;width:56px;height:18px;border-right:1px solid #e3ebf6;border-bottom:1px solid #e3ebf6"></div>
<div class="a gt" style="left:372.5px;top:554px">Rate</div>
<div class="a" style="left:40px;top:570px;width:32px;height:19px;background:#fafafa;border-right:1px solid #eef0f3;border-bottom:1px solid #dde8f4"></div>
<div class="a gt" style="left:47px;top:573px">1</div>
<div class="a" style="left:72px;top:570px;width:84px;height:19px;background:#bcdcfa;border-right:1px solid #f0f0f0;border-bottom:1px solid #f0f0f0"></div>
<div class="a gt" style="left:77.7px;top:573px">Arifin</div>
<div class="a" style="left:156px;top:570px;width:28px;height:19px;background:#fff;border-right:1px solid #f0f0f0;border-bottom:1px solid #f0f0f0"></div>
<div class="a gt" style="left:162.7px;top:573px">1</div>
<div class="a" style="left:184px;top:570px;width:111px;height:19px;background:#bcdcfa;border-right:1px solid #f0f0f0;border-bottom:1px solid #f0f0f0"></div>
<div class="a gt" style="left:190.7px;top:573px">Document Control</div>
<div class="a" style="left:295px;top:570px;width:72px;height:19px;background:#fff;border-right:1px solid #f0f0f0;border-bottom:1px solid #f0f0f0"></div>
<div class="a gt" style="left:301.7px;top:573px">Arifin</div>
<div class="a" style="left:367px;top:570px;width:56px;height:19px;background:#fff;border-right:1px solid #f0f0f0;border-bottom:1px solid #f0f0f0"></div>
<div class="a gt" style="left:373.7px;top:573px">17.7885</div>
<div class="a" style="left:40px;top:589px;width:32px;height:19px;background:#fafafa;border-right:1px solid #eef0f3;border-bottom:1px solid #dde8f4"></div>
<div class="a gt" style="left:47px;top:592px">2</div>
<div class="a" style="left:72px;top:589px;width:84px;height:19px;background:#bcdcfa;border-right:1px solid #f0f0f0;border-bottom:1px solid #f0f0f0"></div>
<div class="a gt" style="left:77.7px;top:592px">Arifin</div>
<div class="a" style="left:156px;top:589px;width:28px;height:19px;background:#fff;border-right:1px solid #f0f0f0;border-bottom:1px solid #f0f0f0"></div>
<div class="a gt" style="left:162.7px;top:592px">2</div>
<div class="a" style="left:184px;top:589px;width:111px;height:19px;background:#bcdcfa;border-right:1px solid #f0f0f0;border-bottom:1px solid #f0f0f0"></div>
<div class="a gt" style="left:190.7px;top:592px">Document Control</div>
<div class="a" style="left:295px;top:589px;width:72px;height:19px;background:#fff;border-right:1px solid #f0f0f0;border-bottom:1px solid #f0f0f0"></div>
<div class="a gt" style="left:301.7px;top:592px">Norred</div>
<div class="a" style="left:367px;top:589px;width:56px;height:19px;background:#fff;border-right:1px solid #f0f0f0;border-bottom:1px solid #f0f0f0"></div>
<div class="a gt" style="left:373.7px;top:592px">16.8269</div>
<div class="a" style="left:40px;top:608px;width:32px;height:19px;background:#fafafa;border-right:1px solid #eef0f3;border-bottom:1px solid #dde8f4"></div>
<div class="a gt" style="left:47px;top:611px">3</div>
<div class="a" style="left:72px;top:608px;width:84px;height:19px;background:#bcdcfa;border-right:1px solid #f0f0f0;border-bottom:1px solid #f0f0f0"></div>
<div class="a gt" style="left:77.7px;top:611px">Arifin</div>
<div class="a" style="left:156px;top:608px;width:28px;height:19px;background:#fff;border-right:1px solid #f0f0f0;border-bottom:1px solid #f0f0f0"></div>
<div class="a gt" style="left:162.7px;top:611px">3</div>
<div class="a" style="left:184px;top:608px;width:111px;height:19px;background:#bcdcfa;border-right:1px solid #f0f0f0;border-bottom:1px solid #f0f0f0"></div>
<div class="a gt" style="left:190.7px;top:611px">Document Control</div>
<div class="a" style="left:295px;top:608px;width:72px;height:19px;background:#fff;border-right:1px solid #f0f0f0;border-bottom:1px solid #f0f0f0"></div>
<div class="a gt" style="left:301.7px;top:611px">Kharatishvili</div>
<div class="a" style="left:367px;top:608px;width:56px;height:19px;background:#fff;border-right:1px solid #f0f0f0;border-bottom:1px solid #f0f0f0"></div>
<div class="a gt" style="left:373.7px;top:611px">16.8269</div>
<div class="a" style="left:40px;top:627px;width:32px;height:19px;background:#fafafa;border-right:1px solid #eef0f3;border-bottom:1px solid #dde8f4"></div>
<div class="a gt" style="left:47px;top:630px">4</div>
<div class="a" style="left:72px;top:627px;width:84px;height:19px;background:#fff;border-right:1px solid #f0f0f0;border-bottom:1px solid #f0f0f0"></div>
<div class="a gt" style="left:77.7px;top:630px">Chai</div>
<div class="a" style="left:156px;top:627px;width:28px;height:19px;background:#fff;border-right:1px solid #f0f0f0;border-bottom:1px solid #f0f0f0"></div>
<div class="a gt" style="left:162.7px;top:630px">4</div>
<div class="a" style="left:184px;top:627px;width:111px;height:19px;background:#fff;border-right:1px solid #f0f0f0;border-bottom:1px solid #f0f0f0"></div>
<div class="a gt" style="left:190.7px;top:630px">Information Services</div>
<div class="a" style="left:295px;top:627px;width:72px;height:19px;background:#fff;border-right:1px solid #f0f0f0;border-bottom:1px solid #f0f0f0"></div>
<div class="a gt" style="left:301.7px;top:630px">Chai</div>
<div class="a" style="left:367px;top:627px;width:56px;height:19px;background:#fff;border-right:1px solid #f0f0f0;border-bottom:1px solid #f0f0f0"></div>
<div class="a gt" style="left:373.7px;top:630px">10.25</div>
<div class="a" style="left:40px;top:646px;width:32px;height:19px;background:#fafafa;border-right:1px solid #eef0f3;border-bottom:1px solid #dde8f4"></div>
<div class="a gt" style="left:47px;top:649px">5</div>
<div class="a" style="left:72px;top:646px;width:84px;height:19px;background:#fff;border-right:1px solid #f0f0f0;border-bottom:1px solid #f0f0f0"></div>
<div class="a gt" style="left:77.7px;top:649px">Chai</div>
<div class="a" style="left:156px;top:646px;width:28px;height:19px;background:#fff;border-right:1px solid #f0f0f0;border-bottom:1px solid #f0f0f0"></div>
<div class="a gt" style="left:162.7px;top:649px">5</div>
<div class="a" style="left:184px;top:646px;width:111px;height:19px;background:#fff;border-right:1px solid #f0f0f0;border-bottom:1px solid #f0f0f0"></div>
<div class="a gt" style="left:190.7px;top:649px">Information Services</div>
<div class="a" style="left:295px;top:646px;width:72px;height:19px;background:#fff;border-right:1px solid #f0f0f0;border-bottom:1px solid #f0f0f0"></div>
<div class="a gt" style="left:301.7px;top:649px">Berge</div>
<div class="a" style="left:367px;top:646px;width:56px;height:19px;background:#fff;border-right:1px solid #f0f0f0;border-bottom:1px solid #f0f0f0"></div>
<div class="a gt" style="left:373.7px;top:649px">10.25</div>
<div class="a" style="left:40px;top:665px;width:32px;height:19px;background:#fafafa;border-right:1px solid #eef0f3;border-bottom:1px solid #dde8f4"></div>
<div class="a gt" style="left:47px;top:668px">6</div>
<div class="a" style="left:72px;top:665px;width:84px;height:19px;background:#fff;border-right:1px solid #f0f0f0;border-bottom:1px solid #f0f0f0"></div>
<div class="a gt" style="left:77.7px;top:668px">Chai</div>
<div class="a" style="left:156px;top:665px;width:28px;height:19px;background:#fff;border-right:1px solid #f0f0f0;border-bottom:1px solid #f0f0f0"></div>
<div class="a gt" style="left:162.7px;top:668px">6</div>
<div class="a" style="left:184px;top:665px;width:111px;height:19px;background:#fff;border-right:1px solid #f0f0f0;border-bottom:1px solid #f0f0f0"></div>
<div class="a gt" style="left:190.7px;top:668px">Information Services</div>
<div class="a" style="left:295px;top:665px;width:72px;height:19px;background:#fff;border-right:1px solid #f0f0f0;border-bottom:1px solid #f0f0f0"></div>
<div class="a gt" style="left:301.7px;top:668px">Trenary</div>
<div class="a" style="left:367px;top:665px;width:56px;height:19px;background:#fff;border-right:1px solid #f0f0f0;border-bottom:1px solid #f0f0f0"></div>
<div class="a gt" style="left:373.7px;top:668px">50.4808</div>
<div class="a" style="left:40px;top:684px;width:32px;height:19px;background:#fafafa;border-right:1px solid #eef0f3;border-bottom:1px solid #dde8f4"></div>
<div class="a gt" style="left:47px;top:687px">7</div>
<div class="a" style="left:72px;top:684px;width:84px;height:19px;background:#fff;border-right:1px solid #f0f0f0;border-bottom:1px solid #f0f0f0"></div>
<div class="a gt" style="left:77.7px;top:687px">Chai</div>
<div class="a" style="left:156px;top:684px;width:28px;height:19px;background:#fff;border-right:1px solid #f0f0f0;border-bottom:1px solid #f0f0f0"></div>
<div class="a gt" style="left:162.7px;top:687px">7</div>
<div class="a" style="left:184px;top:684px;width:111px;height:19px;background:#fff;border-right:1px solid #f0f0f0;border-bottom:1px solid #f0f0f0"></div>
<div class="a gt" style="left:190.7px;top:687px">Information Services</div>
<div class="a" style="left:295px;top:684px;width:72px;height:19px;background:#fff;border-right:1px solid #f0f0f0;border-bottom:1px solid #f0f0f0"></div>
<div class="a gt" style="left:301.7px;top:687px">Conroy</div>
<div class="a" style="left:367px;top:684px;width:56px;height:19px;background:#fff;border-right:1px solid #f0f0f0;border-bottom:1px solid #f0f0f0"></div>
<div class="a gt" style="left:373.7px;top:687px">39.6635</div>
<div class="a" style="left:40px;top:703px;width:32px;height:19px;background:#fafafa;border-right:1px solid #eef0f3;border-bottom:1px solid #dde8f4"></div>
<div class="a gt" style="left:47px;top:706px">8</div>
<div class="a" style="left:72px;top:703px;width:84px;height:19px;background:#fff;border-right:1px solid #f0f0f0;border-bottom:1px solid #f0f0f0"></div>
<div class="a gt" style="left:77.7px;top:706px">Chai</div>
<div class="a" style="left:156px;top:703px;width:28px;height:19px;background:#fff;border-right:1px solid #f0f0f0;border-bottom:1px solid #f0f0f0"></div>
<div class="a gt" style="left:162.7px;top:706px">8</div>
<div class="a" style="left:184px;top:703px;width:111px;height:19px;background:#fff;border-right:1px solid #f0f0f0;border-bottom:1px solid #f0f0f0"></div>
<div class="a gt" style="left:190.7px;top:706px">Information Services</div>
<div class="a" style="left:295px;top:703px;width:72px;height:19px;background:#fff;border-right:1px solid #f0f0f0;border-bottom:1px solid #f0f0f0"></div>
<div class="a gt" style="left:301.7px;top:706px">Ajenstat</div>
<div class="a" style="left:367px;top:703px;width:56px;height:19px;background:#fff;border-right:1px solid #f0f0f0;border-bottom:1px solid #f0f0f0"></div>
<div class="a gt" style="left:373.7px;top:706px">38.4615</div>
<div class="a" style="left:40px;top:722px;width:32px;height:19px;background:#fafafa;border-right:1px solid #eef0f3;border-bottom:1px solid #dde8f4"></div>
<div class="a gt" style="left:47px;top:725px">9</div>
<div class="a" style="left:72px;top:722px;width:84px;height:19px;background:#fff;border-right:1px solid #f0f0f0;border-bottom:1px solid #f0f0f0"></div>
<div class="a gt" style="left:77.7px;top:725px">Chai</div>
<div class="a" style="left:156px;top:722px;width:28px;height:19px;background:#fff;border-right:1px solid #f0f0f0;border-bottom:1px solid #f0f0f0"></div>
<div class="a gt" style="left:162.7px;top:725px">9</div>
<div class="a" style="left:184px;top:722px;width:111px;height:19px;background:#fff;border-right:1px solid #f0f0f0;border-bottom:1px solid #f0f0f0"></div>
<div class="a gt" style="left:190.7px;top:725px">Information Services</div>
<div class="a" style="left:295px;top:722px;width:72px;height:19px;background:#fff;border-right:1px solid #f0f0f0;border-bottom:1px solid #f0f0f0"></div>
<div class="a gt" style="left:301.7px;top:725px">Wilson</div>
<div class="a" style="left:367px;top:722px;width:56px;height:19px;background:#fff;border-right:1px solid #f0f0f0;border-bottom:1px solid #f0f0f0"></div>
<div class="a gt" style="left:373.7px;top:725px">38.4615</div>
<div class="a" style="left:40px;top:741px;width:32px;height:19px;background:#fafafa;border-right:1px solid #eef0f3;border-bottom:1px solid #dde8f4"></div>
<div class="a gt" style="left:47px;top:744px">10</div>
<div class="a" style="left:72px;top:741px;width:84px;height:19px;background:#fff;border-right:1px solid #f0f0f0;border-bottom:1px solid #f0f0f0"></div>
<div class="a gt" style="left:77.7px;top:744px">Chai</div>
<div class="a" style="left:156px;top:741px;width:28px;height:19px;background:#fff;border-right:1px solid #f0f0f0;border-bottom:1px solid #f0f0f0"></div>
<div class="a gt" style="left:162.7px;top:744px">10</div>
<div class="a" style="left:184px;top:741px;width:111px;height:19px;background:#fff;border-right:1px solid #f0f0f0;border-bottom:1px solid #f0f0f0"></div>
<div class="a gt" style="left:190.7px;top:744px">Information Services</div>
<div class="a" style="left:295px;top:741px;width:72px;height:19px;background:#fff;border-right:1px solid #f0f0f0;border-bottom:1px solid #f0f0f0"></div>
<div class="a gt" style="left:301.7px;top:744px">Connelly</div>
<div class="a" style="left:367px;top:741px;width:56px;height:19px;background:#fff;border-right:1px solid #f0f0f0;border-bottom:1px solid #f0f0f0"></div>
<div class="a gt" style="left:373.7px;top:744px">32.4519</div>
<div class="a" style="left:40px;top:760px;width:32px;height:19px;background:#fafafa;border-right:1px solid #eef0f3;border-bottom:1px solid #dde8f4"></div>
<div class="a gt" style="left:47px;top:763px">11</div>
<div class="a" style="left:72px;top:760px;width:84px;height:19px;background:#fff;border-right:1px solid #f0f0f0;border-bottom:1px solid #f0f0f0"></div>
<div class="a gt" style="left:77.7px;top:763px">Chai</div>
<div class="a" style="left:156px;top:760px;width:28px;height:19px;background:#fff;border-right:1px solid #f0f0f0;border-bottom:1px solid #f0f0f0"></div>
<div class="a gt" style="left:162.7px;top:763px">11</div>
<div class="a" style="left:184px;top:760px;width:111px;height:19px;background:#fff;border-right:1px solid #f0f0f0;border-bottom:1px solid #f0f0f0"></div>
<div class="a gt" style="left:190.7px;top:763px">Information Services</div>
<div class="a" style="left:295px;top:760px;width:72px;height:19px;background:#fff;border-right:1px solid #f0f0f0;border-bottom:1px solid #f0f0f0"></div>
<div class="a gt" style="left:301.7px;top:763px">Meyyappan</div>
<div class="a" style="left:367px;top:760px;width:56px;height:19px;background:#fff;border-right:1px solid #f0f0f0;border-bottom:1px solid #f0f0f0"></div>
<div class="a gt" style="left:373.7px;top:763px">32.4519</div>
<div class="a" style="left:72px;top:570px;width:84px;height:19px;border:1px dotted #000"></div>
<div class="a" style="left:35px;top:796px;width:676px;height:26px;background:#fbe3a0;border-radius:0 0 3px 3px"></div>
<div class="a" style="left:35px;top:796px;width:676px;height:22px;background:#ede28d"></div>
<svg class="a" style="left:38px;top:799px" width="16" height="16" viewBox="0 0 16 16"><circle cx="8" cy="8" r="7.5" fill="#3c9a3c"/><circle cx="8" cy="7" r="6" fill="#5cb85c"/><path d="M4 8L7 11L12 5" stroke="#fff" stroke-width="2" fill="none"/></svg>
<div class="a st" style="left:58px;top:800px;letter-spacing:-0.05px">Query exe...</div>
<div class="a st" style="left:135px;top:800px;letter-spacing:-0.21px">(LocalDb)\v11.0 (11.0 SP1)</div>
<div class="a st" style="left:285px;top:800px;letter-spacing:-0.29px">SSW2000\DorbenZhang (54)</div>
<div class="a st" style="left:446px;top:800px;letter-spacing:0.07px">aspnet-WebApplication4...</div>
<div class="a st" style="left:599px;top:800px;letter-spacing:-0.38px">00:00:00</div>
<div class="a st" style="left:654px;top:800px;letter-spacing:0px">11 rows</div>
<div class="a" style="left:130px;top:800px;width:1px;height:14px;background:#bcc0d4;box-shadow:1px 0 0 #fff"></div>
<div class="a" style="left:279px;top:800px;width:1px;height:14px;background:#bcc0d4;box-shadow:1px 0 0 #fff"></div>
<div class="a" style="left:441px;top:800px;width:1px;height:14px;background:#bcc0d4;box-shadow:1px 0 0 #fff"></div>
<div class="a" style="left:594px;top:800px;width:1px;height:14px;background:#bcc0d4;box-shadow:1px 0 0 #fff"></div>
<div class="a" style="left:649px;top:800px;width:1px;height:14px;background:#bcc0d4;box-shadow:1px 0 0 #fff"></div>

<div class="a" style="left:8px;top:827px;width:731px;height:24px;background:#293955"></div>
<div class="a sb" style="left:12px;top:833px">Ready</div>
<div class="a sb" style="left:368px;top:833px">Ln 1</div>
<div class="a sb" style="left:552px;top:833px">Col 1</div>
<div class="a sb" style="left:688px;top:833px">INS</div>
<svg class="a" style="left:728px;top:838px" width="10" height="10"><g fill="#e0e6f0"><rect x="7" y="0" width="2" height="2"/><rect x="4" y="3" width="2" height="2"/><rect x="7" y="3" width="2" height="2"/><rect x="1" y="6" width="2" height="2"/><rect x="4" y="6" width="2" height="2"/><rect x="7" y="6" width="2" height="2"/></g></svg>

</body></html>
